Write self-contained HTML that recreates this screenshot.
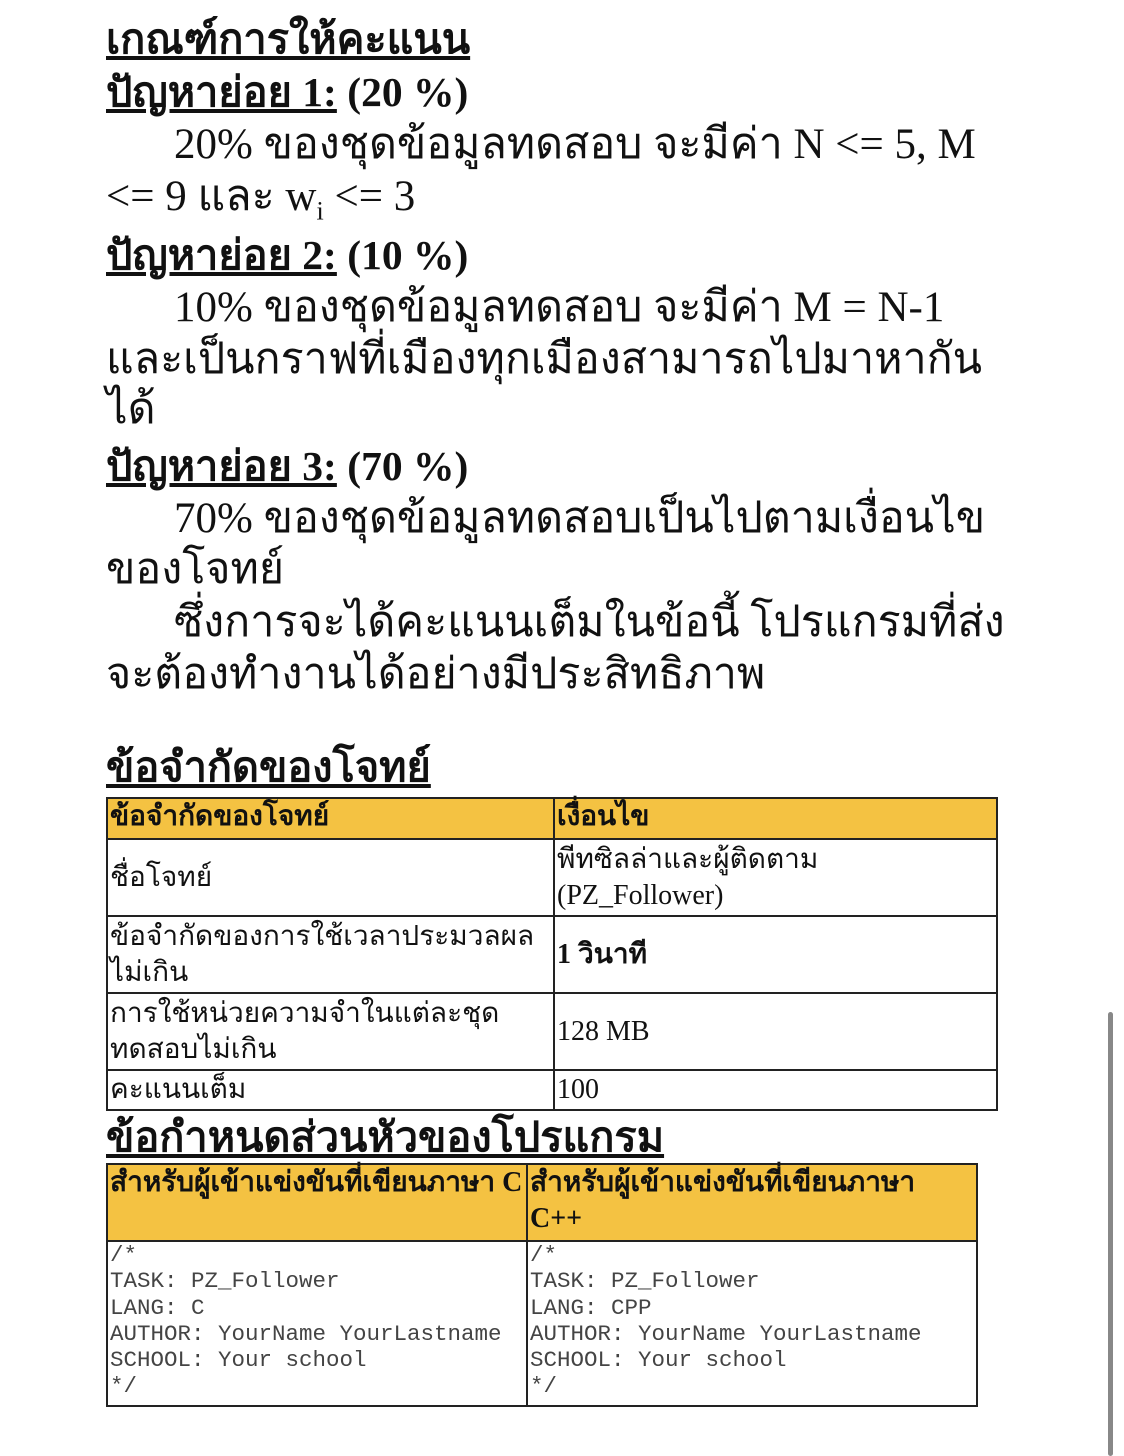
<!DOCTYPE html>
<html><head><meta charset="utf-8"><style>
body{margin:0;width:1124px;height:1456px;background:#fff;position:relative;overflow:hidden;font-family:"Liberation Serif","Noto Serif CJK SC",serif;color:#111}
.l{position:absolute;left:106px;font-size:43px;line-height:50px;white-space:nowrap}
.b{font-weight:bold;font-size:41.5px}
.u{text-decoration:underline}
.in{left:174px}
table{position:absolute;border-collapse:collapse;font-size:28px;line-height:36px}
td{border:2px solid #222;padding:0 2px;vertical-align:middle}
th{border:2px solid #222;background:#f4c242;text-align:left;padding:0 2px;vertical-align:top;font-weight:bold}
pre{margin:0;font-family:"Liberation Mono",monospace;font-size:22.5px;line-height:26.3px;color:#444}
.sb{position:absolute;left:1108px;top:1012px;width:5px;height:444px;background:#888;border-radius:3px}
</style></head><body>
<div class="l b u" style="top:14px">เกณฑ์การให้คะแนน</div>
<div class="l b" style="top:67px"><span class="u">ปัญหาย่อย 1:</span> (20 %)</div>
<div class="l in" style="top:120px">20% ของชุดข้อมูลทดสอบ จะมีค่า N &lt;= 5, M</div>
<div class="l" style="top:172px">&lt;= 9 และ w<sub style="font-size:26px">i</sub> &lt;= 3</div>
<div class="l b" style="top:230px"><span class="u">ปัญหาย่อย 2:</span> (10 %)</div>
<div class="l in" style="top:283px">10% ของชุดข้อมูลทดสอบ จะมีค่า M = N-1</div>
<div class="l" style="top:335px">และเป็นกราฟที่เมืองทุกเมืองสามารถไปมาหากัน</div>
<div class="l" style="top:385px">ได้</div>
<div class="l b" style="top:441px"><span class="u">ปัญหาย่อย 3:</span> (70 %)</div>
<div class="l in" style="top:494px">70% ของชุดข้อมูลทดสอบเป็นไปตามเงื่อนไข</div>
<div class="l" style="top:545px">ของโจทย์</div>
<div class="l in" style="top:598px">ซึ่งการจะได้คะแนนเต็มในข้อนี้ โปรแกรมที่ส่ง</div>
<div class="l" style="top:650px">จะต้องทำงานได้อย่างมีประสิทธิภาพ</div>
<div class="l b u" style="top:742px">ข้อจำกัดของโจทย์</div>
<table style="left:106px;top:797px;width:892px">
<tr style="height:41px"><th style="width:441px">ข้อจำกัดของโจทย์</th><th>เงื่อนไข</th></tr>
<tr style="height:77px"><td>ชื่อโจทย์</td><td>พีทซิลล่าและผู้ติดตาม<br>(PZ_Follower)</td></tr>
<tr style="height:77px"><td>ข้อจำกัดของการใช้เวลาประมวลผล<br>ไม่เกิน</td><td style="font-weight:bold">1 วินาที</td></tr>
<tr style="height:77px"><td>การใช้หน่วยความจำในแต่ละชุด<br>ทดสอบไม่เกิน</td><td>128 MB</td></tr>
<tr style="height:40px"><td>คะแนนเต็ม</td><td>100</td></tr>
</table>
<div class="l b u" style="top:1112px">ข้อกำหนดส่วนหัวของโปรแกรม</div>
<table style="left:106px;top:1163px;width:872px">
<tr style="height:77px"><th style="width:414px">สำหรับผู้เข้าแข่งขันที่เขียนภาษา C</th><th>สำหรับผู้เข้าแข่งขันที่เขียนภาษา<br>C++</th></tr>
<tr style="height:165px"><td style="vertical-align:top"><pre>/*
TASK: PZ_Follower
LANG: C
AUTHOR: YourName YourLastname
SCHOOL: Your school
*/</pre></td><td style="vertical-align:top"><pre>/*
TASK: PZ_Follower
LANG: CPP
AUTHOR: YourName YourLastname
SCHOOL: Your school
*/</pre></td></tr>
</table>
<div class="sb"></div>
</body></html>
